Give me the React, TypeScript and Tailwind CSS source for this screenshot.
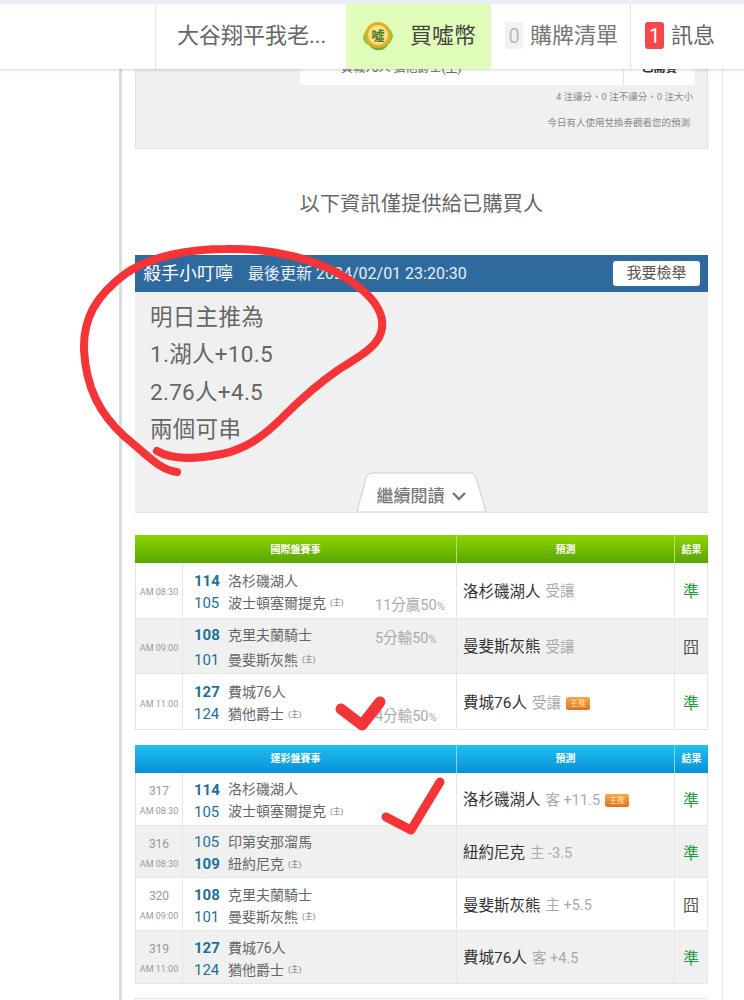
import React from 'react';

type Team = { num: string; name: string; bold?: boolean; home?: boolean };
type Game = {
  no?: string;
  time: string;
  teams: [Team, Team];
  teamGap?: string;
  note?: string;
  noteClass?: string;
  pick: string;
  odds: string;
  star?: boolean;
  result: string;
};

const intlGames: Game[] = [
  {
    time: 'AM 08:30',
    teams: [
      { num: '114', name: '洛杉磯湖人', bold: true },
      { num: '105', name: '波士頓塞爾提克', home: true },
    ],
    note: '11分贏',
    noteClass: 'mt-[33px]',
    pick: '洛杉磯湖人',
    odds: '受讓',
    result: '準',
  },
  {
    time: 'AM 09:00',
    teams: [
      { num: '108', name: '克里夫蘭騎士', bold: true },
      { num: '101', name: '曼斐斯灰熊', home: true },
    ],
    teamGap: 'gap-[4px]',
    note: '5分輸',
    noteClass: 'mt-[10px]',
    pick: '曼斐斯灰熊',
    odds: '受讓',
    result: '囧',
  },
  {
    time: 'AM 11:00',
    teams: [
      { num: '127', name: '費城76人', bold: true },
      { num: '124', name: '猶他爵士', home: true },
    ],
    note: '4分輸',
    noteClass: 'mt-[33px]',
    pick: '費城76人',
    odds: '受讓',
    star: true,
    result: '準',
  },
];

const lotteryGames: Game[] = [
  {
    no: '317',
    time: 'AM 08:30',
    teams: [
      { num: '114', name: '洛杉磯湖人', bold: true },
      { num: '105', name: '波士頓塞爾提克', home: true },
    ],
    pick: '洛杉磯湖人',
    odds: '客 +11.5',
    star: true,
    result: '準',
  },
  {
    no: '316',
    time: 'AM 08:30',
    teams: [
      { num: '105', name: '印第安那溜馬' },
      { num: '109', name: '紐約尼克', bold: true, home: true },
    ],
    pick: '紐約尼克',
    odds: '主 -3.5',
    result: '準',
  },
  {
    no: '320',
    time: 'AM 09:00',
    teams: [
      { num: '108', name: '克里夫蘭騎士', bold: true },
      { num: '101', name: '曼斐斯灰熊', home: true },
    ],
    pick: '曼斐斯灰熊',
    odds: '主 +5.5',
    result: '囧',
  },
  {
    no: '319',
    time: 'AM 11:00',
    teams: [
      { num: '127', name: '費城76人', bold: true },
      { num: '124', name: '猶他爵士', home: true },
    ],
    pick: '費城76人',
    odds: '客 +4.5',
    result: '準',
  },
];

const CoinLogo = () => (
  <svg width="34" height="34" viewBox="0 0 34 34" className="shrink-0">
    <path d="M2 19 C3 12 7 9 10 9 L10 27 C6 26 3 23 2 19 Z" fill="#7fc545" />
    <path d="M32 17 C31 11 27 8 24 8 L24 27 C28 26 31 22 32 17 Z" fill="#7fc545" />
    <path d="M8 26 C12 33 23 33 27 26 L17 22 Z" fill="#66b437" />
    <circle cx="17" cy="16" r="13" fill="#e4ae22" />
    <circle cx="17" cy="16" r="10" fill="#f7e08a" />
    <text x="17" y="21" textAnchor="middle" fontSize="13" fontWeight="700" fill="#4a7a22">
      噓
    </text>
  </svg>
);

const StarBadge = () => (
  <span className="ml-[5px] inline-flex h-[13px] w-[24px] items-center justify-center rounded-[2px] bg-gradient-to-b from-[#f7a94a] to-[#e0701c] text-[8px] leading-none text-[#fde6b8]">
    主推
  </span>
);

const GameRow = ({ game, even, rowClass }: { game: Game; even: boolean; rowClass: string }) => (
  <div className={`flex border-b border-[#e6e6e6] ${rowClass} ${even ? 'bg-[#f0f0f0]' : 'bg-white'}`}>
    <div className="flex w-[48px] shrink-0 flex-col items-center justify-center gap-[5px] border-x border-[#e6e6e6] pt-[4px] text-[#999]">
      {game.no && <span className="text-[12px] leading-[15px]">{game.no}</span>}
      <span className="text-[9px] leading-[14px]">{game.time}</span>
    </div>
    <div className="flex w-[274px] shrink-0 border-r border-[#e6e6e6]">
      <div className={`flex w-[192px] shrink-0 flex-col justify-center pl-[11px] pt-[4px] ${game.teamGap ?? 'gap-[1px]'}`}>
        {game.teams.map((team) => (
          <div key={team.num} className="flex h-[21px] items-center">
            <span className={`w-[34px] text-[15px] text-[#1d7196] ${team.bold ? 'font-bold' : ''}`}>
              {team.num}
            </span>
            <span className="text-[14px] text-[#666]">{team.name}</span>
            {team.home && <span className="ml-[4px] text-[8px] text-[#777]">(主)</span>}
          </div>
        ))}
      </div>
      {game.note && (
        <div className={`text-[14.5px] leading-[20px] text-[#aaa] ${game.noteClass}`}>
          {game.note}50<span className="text-[11px]">%</span>
        </div>
      )}
    </div>
    <div className="flex w-[218px] shrink-0 items-center border-r border-[#e6e6e6] pl-[6px] pt-[4px]">
      <span className="text-[15.5px] text-[#333]">{game.pick}</span>
      <span className="ml-[5px] text-[14.5px] text-[#aaa]">{game.odds}</span>
      {game.star && <StarBadge />}
    </div>
    <div
      className={`flex w-[33px] shrink-0 items-center justify-center border-r border-[#e6e6e6] pt-[4px] text-[16px] ${
        game.result === '準' ? 'text-[#1f9a45]' : 'text-[#555]'
      }`}
    >
      {game.result}
    </div>
  </div>
);

const GameTable = ({
  title,
  headClass,
  lineClass,
  games,
  rowClass,
}: {
  title: string;
  headClass: string;
  lineClass: string;
  games: Game[];
  rowClass: string;
}) => (
  <div>
    <div className={`flex h-[28px] text-[10px] font-bold text-white ${headClass}`}>
      <div className={`flex w-[322px] items-center justify-center border-r ${lineClass}`}>{title}</div>
      <div className={`flex w-[218px] items-center justify-center border-r ${lineClass}`}>預測</div>
      <div className="flex w-[33px] items-center justify-center">結果</div>
    </div>
    {games.map((game, i) => (
      <GameRow key={game.time + i} game={game} even={i % 2 === 1} rowClass={rowClass} />
    ))}
  </div>
);

export default function App() {
  return (
    <div className="relative h-[1000px] w-[744px] overflow-hidden bg-white font-['Roboto','Noto_Sans_CJK_TC',sans-serif]">
      <header className="relative z-10 flex h-[69px] border-t-[4px] border-[#e8eef3] bg-white shadow-[0_1px_3px_rgba(0,0,0,0.18)]">
        <div className="w-[156px] border-r border-[#e4e4e4]" />
        <div className="flex w-[190px] items-center pb-[2px] pl-[21px] text-[22px] text-[#666]">大谷翔平我老...</div>
        <div className="flex w-[145px] items-center gap-[15px] bg-[#e0fdb9] pb-[2px] pl-[15px] text-[22px] text-[#444]">
          <CoinLogo />
          買噓幣
        </div>
        <div className="flex w-[140px] items-center border-r border-[#e4e4e4] pb-[2px] pl-[14px] text-[22px] text-[#777]">
          <span className="mr-[7px] flex h-[27px] w-[18px] items-center justify-center rounded-[3px] bg-[#f2f2f2] text-[20px] text-[#bbb]">
            0
          </span>
          購牌清單
        </div>
        <div className="flex flex-1 items-center pb-[2px] pl-[14px] text-[22px] text-[#666]">
          <span className="mr-[7px] flex h-[27px] w-[19px] items-center justify-center rounded-[3px] bg-[#f4484b] text-[20px] text-white">
            1
          </span>
          訊息
        </div>
      </header>

      <main className="ml-[119px] h-[931px] w-[604px] border-l-[3px] border-r border-l-[#dcdcdc] border-r-[#e6e6e6] pl-[13px] pr-[14px]">
        <section className="flex h-[80px] flex-col border border-t-0 border-[#e2e2e2] bg-[#f0f0f0]">
          <div className="-mt-[8px] ml-[164px] flex h-[24px] w-[395px] shrink-0 items-end bg-white text-[12px] text-[#666]">
            <span className="pb-[8px] pl-[41px]">費城76人 猶他爵士(主)</span>
            <span className="ml-auto flex h-full w-[72px] items-end justify-center border-l border-[#e6e6e6] pb-[8px] font-bold text-[#333]">
              已開賽
            </span>
          </div>
          <p className="mt-[4px] pr-[14px] text-right text-[9.5px] leading-[16px] text-[#888]">
            4 注讓分、0 注不讓分、0 注大小
          </p>
          <p className="mt-[10px] pr-[17px] text-right text-[9.5px] leading-[16px] text-[#888]">
            今日有人使用兌換券觀看您的預測
          </p>
        </section>

        <p className="pt-[40px] text-center text-[20px] leading-[30px] tracking-[0.3px] text-[#666]">
          以下資訊僅提供給已購買人
        </p>

        <section className="mt-[36px]">
          <div className="flex h-[37px] items-center bg-[#2f6a9e] pl-[8px] pr-[8px] text-white">
            <span className="text-[18px]">殺手小叮嚀</span>
            <span className="ml-[15px] text-[16px] text-[#e8eef5]">最後更新 2024/02/01 23:20:30</span>
            <button className="ml-auto h-[25px] w-[87px] rounded-[3px] bg-white text-[15px] text-[#555]">
              我要檢舉
            </button>
          </div>
          <div className="relative h-[221px] border-b border-[#e2e2e2] bg-[#f0f0f0] pl-[15px] pt-[7px] text-[22.5px] leading-[37.3px] tracking-[0.3px] text-[#666]">
            <p>明日主推為</p>
            <p>1.湖人+10.5</p>
            <p>2.76人+4.5</p>
            <p>兩個可串</p>
            <div className="absolute bottom-0 left-[221px] flex h-[40px] w-[131px] items-center justify-center tracking-normal">
              <svg width="131" height="40" viewBox="0 0 131 40" className="absolute inset-0">
                <path d="M1 40 L10 6 Q12 1 18 1 L113 1 Q119 1 120 6 L130 40 Z" fill="#fff" stroke="#cfcfcf" />
              </svg>
              <span className="relative flex items-center gap-[6px] pt-[8px] text-[17px] font-medium leading-none text-[#777]">
                繼續閱讀
                <svg width="16" height="10" viewBox="0 0 16 10">
                  <path d="M2 2 L8 8 L14 2" fill="none" stroke="#777" strokeWidth="2.4" />
                </svg>
              </span>
            </div>
          </div>
        </section>

        <div className="mt-[22px]">
          <GameTable
            title="國際盤賽事"
            headClass="bg-gradient-to-b from-[#8ed500] to-[#58a500]"
            lineClass="border-[#b4e070]"
            games={intlGames}
            rowClass="h-[55.67px]"
          />
        </div>

        <div className="mt-[15px]">
          <GameTable
            title="運彩盤賽事"
            headClass="bg-gradient-to-b from-[#1fc1f0] to-[#0a8fd8]"
            lineClass="border-[#86d4f2]"
            games={lotteryGames}
            rowClass="h-[52.75px]"
          />
        </div>

        <div className="mt-[14px] h-[20px] border border-[#e6e6e6] bg-[#fafafa]" />
      </main>

      {/* hand-drawn marks on top of the screenshot */}
      <svg className="pointer-events-none absolute inset-0 z-20" width="744" height="1000" viewBox="0 0 744 1000">
        <g fill="none" stroke="#f53438" strokeLinecap="round" strokeLinejoin="round">
          <path
            strokeWidth="8"
            d="M177 472 C160 470 148 456 124 436 C100 414 86 388 84 350 C83 318 96 296 125 274 C150 256 190 249 226 249 C270 248 318 258 352 282 C372 296 384 312 382 328 C380 346 360 356 338 370 C318 384 302 398 286 414 C268 432 250 448 222 454 C198 459 172 460 157 451"
          />
          <path strokeWidth="11" d="M341 709 L362 725 L380 702" />
          <path strokeWidth="9" d="M386 817 L411 830 L440 782" />
        </g>
      </svg>
    </div>
  );
}
